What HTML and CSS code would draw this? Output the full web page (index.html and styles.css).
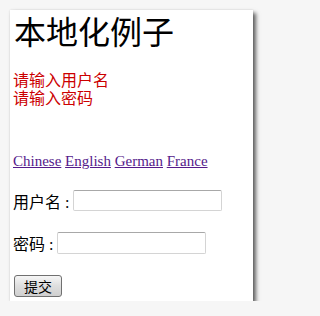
FILE: index.html
```html
<!DOCTYPE html>
<html lang="zh">
<head>
<meta charset="utf-8">
<title>本地化例子</title>
<link rel="stylesheet" href="styles.css">
</head>
<body>
<div class="frame">
  <h1 class="title">本地化例子</h1>
  <div class="errors">
    <div class="error">请输入用户名</div>
    <div class="error">请输入密码</div>
  </div>
  <div class="langs">
    <a href="#zh">Chinese</a> <a href="#en">English</a> <a href="#de">German</a> <a href="#fr">France</a>
  </div>
  <form class="form">
    <div class="row row-user"><label>用户名 : </label><input class="field field-user" type="text"></div>
    <div class="row row-pass"><label>密码 : </label><input class="field field-pass" type="password"></div>
    <div class="row row-submit"><button class="submit" type="button">提交</button></div>
  </form>
</div>
</body>
</html>
```
FILE: styles.css
```css
html, body {
  margin: 0;
  padding: 0;
}
body {
  background: #f6f6f6;
  font-family: "Liberation Serif", "Noto Sans CJK SC", serif;
  font-size: 16px;
  color: #000;
}
.frame {
  display: flow-root;
  margin: 10px 0 0 10px;
  width: 243px;
  height: 291px;
  box-sizing: border-box;
  padding: 2px 0 0 3px;
  background: #fff;
  box-shadow: 3px 3px 4px rgba(0, 0, 0, 0.6), 0 0 2px rgba(0, 0, 0, 0.12);
}
.title {
  margin: 0 0 0 1px;
  font-size: 32px;
  line-height: 36px;
  font-weight: normal;
  font-family: "Noto Sans CJK SC", sans-serif;
}
.errors {
  margin-top: 22px;
  color: #cc0000;
  font-family: "Noto Sans CJK SC", sans-serif;
  font-size: 16px;
  line-height: 18px;
}
.langs {
  margin-top: 46px;
  font-size: 15px;
  line-height: 18px;
}
.langs a {
  color: #551a8b;
  text-decoration: underline;
}
.form {
  margin: 0;
}
.row {
  display: flex;
  align-items: center;
  white-space: pre;
}
.row label {
  font-size: 16px;
  font-family: "Liberation Serif", "Noto Sans CJK SC", serif;
}
.row-user {
  margin-top: 20px;
  height: 21px;
}
.row-pass {
  margin-top: 21px;
  height: 22px;
}
.row-submit {
  margin-top: 20px;
  height: 23px;
  padding-left: 1px;
}
.field {
  box-sizing: border-box;
  width: 149px;
  height: 21px;
  margin: 0;
  padding: 0 2px;
  border: 1px solid #d4d4d4;
  border-top-color: #a8a8a8;
  border-radius: 2px;
  background: #fff;
  outline: none;
}
.field-pass {
  height: 22px;
}
.submit {
  box-sizing: border-box;
  width: 48px;
  height: 22px;
  padding: 0;
  border: 1px solid #707070;
  border-radius: 3px;
  background: linear-gradient(#f6f6f6, #dedede 50%, #cfcfcf);
  font-family: "Noto Sans CJK SC", sans-serif;
  font-size: 14px;
  line-height: 20px;
  color: #000;
}
```
